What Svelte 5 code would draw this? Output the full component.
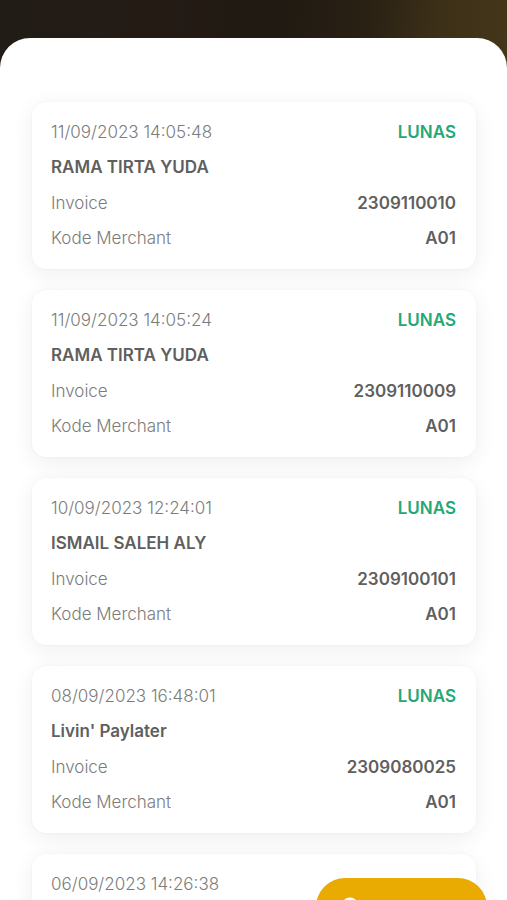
<script>
  const transactions = [
    { date: '11/09/2023 14:05:48', name: 'RAMA TIRTA YUDA', invoice: '2309110010', merchant: 'A01', status: 'LUNAS' },
    { date: '11/09/2023 14:05:24', name: 'RAMA TIRTA YUDA', invoice: '2309110009', merchant: 'A01', status: 'LUNAS' },
    { date: '10/09/2023 12:24:01', name: 'ISMAIL SALEH ALY', invoice: '2309100101', merchant: 'A01', status: 'LUNAS' },
    { date: '08/09/2023 16:48:01', name: "Livin' Paylater", invoice: '2309080025', merchant: 'A01', status: 'LUNAS' },
    { date: '06/09/2023 14:26:38' }
  ];
</script>

<div class="screen">
  <main class="sheet">
    {#each transactions as item}
      <article class="card">
        <div class="row">
          <time>{item.date}</time>
          {#if item.status}<strong class="status">{item.status}</strong>{/if}
        </div>
        {#if item.name}
          <h2>{item.name}</h2>
          <div class="row"><span>Invoice</span><strong>{item.invoice}</strong></div>
          <div class="row"><span>Kode Merchant</span><strong>{item.merchant}</strong></div>
        {/if}
      </article>
    {/each}
  </main>
  <button class="fab" type="button" aria-label="Filter">
    <svg width="20" height="20" viewBox="0 0 20 20" fill="none" stroke="#fff" stroke-width="3" aria-hidden="true">
      <circle cx="10" cy="9" r="7" />
      <path d="M15 14l5 5" />
    </svg>
  </button>
</div>

<style>
  :global(body) {
    margin: 0;
  }
  .screen {
    position: relative;
    box-sizing: border-box;
    height: 100vh;
    overflow: hidden;
    padding-top: 38px;
    background: linear-gradient(95deg, #211c16 0%, #241b15 25%, #201a12 55%, #2a2114 72%, #3d3018 86%, #443619 100%) 0 0 / 100% 80px no-repeat #fff;
    font-family: Inter, "Noto Sans", sans-serif;
  }
  .sheet {
    display: flex;
    flex-direction: column;
    gap: 21px;
    padding: 64px 31px 0 32px;
    border-radius: 30px 30px 0 0;
    background: #fff;
  }
  .card {
    display: grid;
    align-content: space-between;
    box-sizing: border-box;
    min-height: 167px;
    padding: 20px 20px 21px 19px;
    border-radius: 14px;
    background: #fff;
    box-shadow: 0 0 2px rgba(0, 0, 0, 0.06), 0 5px 22px rgba(0, 0, 0, 0.07);
    color: #7c7c7c;
    font-size: 17px;
    font-weight: 300;
    line-height: 20px;
  }
  .row {
    display: flex;
    justify-content: space-between;
  }
  h2,
  strong {
    margin: 0;
    color: #5f5f5f;
    font-size: 17px;
    font-weight: 600;
  }
  .status {
    color: #26a875;
  }
  .fab {
    position: absolute;
    right: 20px;
    bottom: -36px;
    display: flex;
    align-items: center;
    width: 171px;
    height: 58px;
    padding: 0 24px;
    border: 0;
    border-radius: 29px;
    background: #e9aa02;
  }
</style>
